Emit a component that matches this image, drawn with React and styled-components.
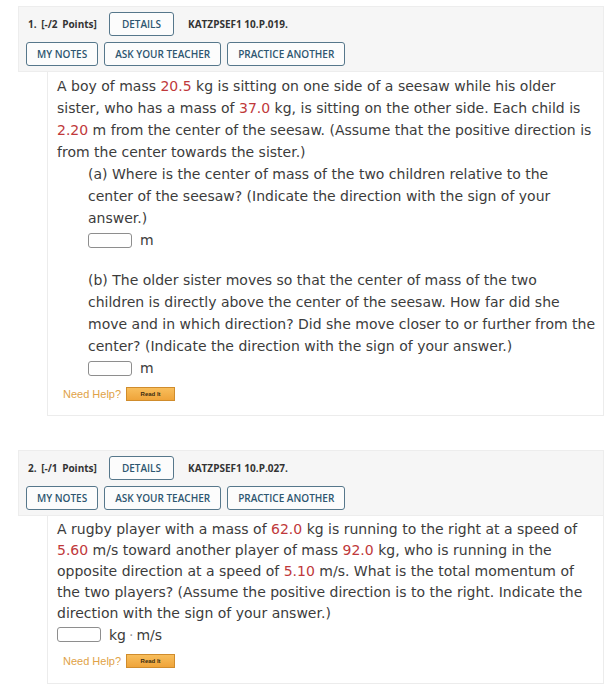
import styled, { createGlobalStyle } from "styled-components";

const GlobalStyle = createGlobalStyle`
  body {
    margin: 0;
    background: #fff;
    font-family: "DejaVu Sans", Verdana, sans-serif;
  }
`;

const Page = styled.div`
  padding: 6px 12px 0 18px;
  display: flex;
  flex-direction: column;
  gap: 34px;
`;

const Card = styled.div`
  width: 586px;
`;

const Header = styled.div`
  background: #f6f6f6;
  border: 1px solid #ededed;
  padding: 5px 8px 5px 7px;
  display: flex;
  flex-direction: column;
  gap: 6px;
`;

const HeaderRow = styled.div`
  display: flex;
  align-items: center;
  gap: 6px;
`;

const Points = styled.span`
  font-family: "Open Sans", sans-serif;
  font-weight: 700;
  font-size: 10px;
  color: #333;
  padding-left: 2px;
  margin-right: 6px;
  word-spacing: 2px;
`;

const Code = styled.span`
  font-family: "Open Sans", sans-serif;
  font-weight: 700;
  font-size: 10px;
  color: #333;
  margin-left: 8px;
`;

const HeadButton = styled.button`
  height: 24px;
  padding: 0 ${(p) => p.pad || 10}px;
  background: #fcfcfc;
  border: 1.5px solid #56778b;
  border-radius: 3px;
  font-family: "Open Sans", sans-serif;
  font-weight: 600;
  font-size: 10px;
  color: #2e5670;
  cursor: pointer;
`;

const Body = styled.div`
  margin-left: 29px;
  border: 1px solid #ececec;
  border-top: none;
  padding: ${(p) => p.top || 3}px 2px ${(p) => p.bottom || 16}px 9px;
`;

const Text = styled.p`
  margin: 0;
  font-size: 14px;
  line-height: ${(p) => p.lh || 22}px;
  color: #3c3c3c;
  white-space: nowrap;
  padding-left: ${(p) => p.indent || 0}px;
`;

const Red = styled.span`
  color: #c0393b;
`;

const AnswerRow = styled.div`
  display: flex;
  align-items: center;
  gap: 8px;
  padding-left: ${(p) => p.indent || 0}px;
  height: ${(p) => p.h || 22}px;
  font-size: 14px;
  color: #3c3c3c;
`;

const Input = styled.div`
  width: 42px;
  height: 13px;
  border: 1px solid #8e8e8e;
  border-radius: 3px;
  background: #fff;
`;

const Spacer = styled.div`
  height: ${(p) => p.h}px;
`;

const Help = styled.div`
  display: flex;
  align-items: center;
  gap: 5px;
  padding-left: 6px;
  margin-top: ${(p) => p.top || 8}px;
`;

const HelpLabel = styled.span`
  font-family: "Liberation Sans", Arial, sans-serif;
  font-size: 11px;
  color: #e0a247;
`;

const ReadIt = styled.span`
  width: 47px;
  height: 12px;
  display: flex;
  align-items: center;
  justify-content: center;
  background: linear-gradient(#f8be5c, #efa43a);
  border: 1px solid #d08c2c;
  font-family: "Liberation Sans", Arial, sans-serif;
  font-weight: 700;
  font-size: 6px;
  color: #3a2a10;
`;

const Dot = styled.span`
  color: #999;
  margin: 0 3px;
`;

const QuestionHeader = ({ num, pts, code }) => (
  <Header>
    <HeaderRow>
      <Points>{num}. [-/{pts} Points]</Points>
      <HeadButton pad={12}>DETAILS</HeadButton>
      <Code>{code}</Code>
    </HeaderRow>
    <HeaderRow>
      <HeadButton>MY NOTES</HeadButton>
      <HeadButton>ASK YOUR TEACHER</HeadButton>
      <HeadButton>PRACTICE ANOTHER</HeadButton>
    </HeaderRow>
  </Header>
);

const NeedHelp = ({ top }) => (
  <Help top={top}>
    <HelpLabel>Need Help?</HelpLabel>
    <ReadIt>Read It</ReadIt>
  </Help>
);

export default function App() {
  return (
    <>
      <GlobalStyle />
      <Page>
        <Card>
          <QuestionHeader num={1} pts={2} code="KATZPSEF1 10.P.019." />
          <Body top={3} bottom={14}>
            <Text>
              A boy of mass <Red>20.5</Red> kg is sitting on one side of a seesaw while his older
              <br />
              sister, who has a mass of <Red>37.0</Red> kg, is sitting on the other side. Each child is
              <br />
              <Red>2.20</Red> m from the center of the seesaw. (Assume that the positive direction is
              <br />
              from the center towards the sister.)
            </Text>
            <Text indent={31}>
              (a) Where is the center of mass of the two children relative to the
              <br />
              center of the seesaw? (Indicate the direction with the sign of your
              <br />
              answer.)
            </Text>
            <AnswerRow indent={31}>
              <Input />
              m
            </AnswerRow>
            <Spacer h={18} />
            <Text indent={31}>
              (b) The older sister moves so that the center of mass of the two
              <br />
              children is directly above the center of the seesaw. How far did she
              <br />
              move and in which direction? Did she move closer to or further from the
              <br />
              center? (Indicate the direction with the sign of your answer.)
            </Text>
            <AnswerRow indent={31}>
              <Input />
              m
            </AnswerRow>
            <NeedHelp top={8} />
          </Body>
        </Card>
        <Card>
          <QuestionHeader num={2} pts={1} code="KATZPSEF1 10.P.027." />
          <Body top={3} bottom={15}>
            <Text lh={21}>
              A rugby player with a mass of <Red>62.0</Red> kg is running to the right at a speed of
              <br />
              <Red>5.60</Red> m/s toward another player of mass <Red>92.0</Red> kg, who is running in the
              <br />
              opposite direction at a speed of <Red>5.10</Red> m/s. What is the total momentum of
              <br />
              the two players? (Assume the positive direction is to the right. Indicate the
              <br />
              direction with the sign of your answer.)
            </Text>
            <AnswerRow h={21}>
              <Input />
              <span>
                kg<Dot>·</Dot>m/s
              </span>
            </AnswerRow>
            <NeedHelp top={9} />
          </Body>
        </Card>
      </Page>
    </>
  );
}
